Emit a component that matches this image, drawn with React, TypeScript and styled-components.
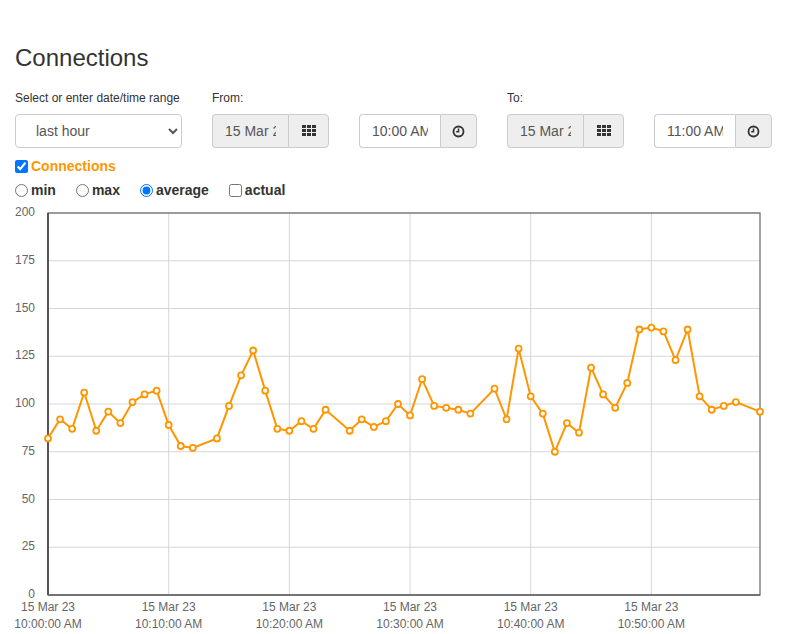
import React from "react";
import styled, { createGlobalStyle } from "styled-components";

const GlobalStyle = createGlobalStyle`
    body {
        margin: 0;
        background: #fff;
        font-family: "Liberation Sans", Arial, sans-serif;
        color: #333;
    }
`;

const DATA: (number | null)[] = [
    82, 92, 87, 106, 86, 96, 90, 101, 105, 107,
    89, 78, 77, null, 82, 99, 115, 128, 107, 87,
    86, 91, 87, 97, null, 86, 92, 88, 91, 100,
    94, 113, 99, 98, 97, 95, null, 108, 92, 129,
    104, 95, 75, 90, 85, 119, 105, 98, 111, 139,
    140, 138, 123, 139, 104, 97, 99, 101, null, 96,
];

const LEFT = 48;
const RIGHT = 760;
const TOP = 8;
const BOTTOM = 390;
const STEP = (RIGHT - LEFT) / 59;

function xOf(i: number) {
    return LEFT + i * STEP;
}

function yOf(v: number) {
    return BOTTOM - (v / 200) * (BOTTOM - TOP);
}

function GridIcon() {
    return (
        <svg width="14" height="12" viewBox="0 0 14 12">
            {[0, 1, 2].map((r) =>
                [0, 1, 2].map((c) => (
                    <rect key={`${r}-${c}`} x={c * 5} y={r * 4} width="4" height="3" fill="#333" />
                ))
            )}
        </svg>
    );
}

function ClockIcon() {
    return (
        <svg width="13" height="13" viewBox="0 0 13 13">
            <circle cx="6.5" cy="6.5" r="5" fill="none" stroke="#333" strokeWidth="1.8" />
            <path d="M6.5 3.5 V6.8 H4.2" fill="none" stroke="#333" strokeWidth="1.5" />
        </svg>
    );
}

function Chart() {
    const points = DATA.map((v, i) => (v === null ? null : { x: xOf(i), y: yOf(v) })).filter(
        (p): p is { x: number; y: number } => p !== null
    );
    const path = points.map((p, i) => `${i === 0 ? "M" : "L"}${p.x.toFixed(1)} ${p.y.toFixed(1)}`).join(" ");
    const yTicks = [0, 25, 50, 75, 100, 125, 150, 175, 200];
    const xTicks = ["10:00:00 AM", "10:10:00 AM", "10:20:00 AM", "10:30:00 AM", "10:40:00 AM", "10:50:00 AM"];

    return (
        <ChartSvg width="787" height="429" viewBox="0 0 787 429">
            {yTicks.map((t) => (
                <g key={t}>
                    <line x1={LEFT} x2={RIGHT} y1={yOf(t)} y2={yOf(t)} stroke="#d6d6d6" strokeWidth="1" />
                    <AxisText x={35} y={yOf(t) + 3} textAnchor="end">
                        {t}
                    </AxisText>
                </g>
            ))}
            {xTicks.map((t, i) => {
                const x = LEFT + i * STEP * 10;
                return (
                    <g key={t}>
                        <line x1={x} x2={x} y1={TOP} y2={BOTTOM} stroke="#d6d6d6" strokeWidth="1" />
                        <AxisText x={x} y={BOTTOM + 16} textAnchor="middle">
                            15 Mar 23
                        </AxisText>
                        <AxisText x={x} y={BOTTOM + 33} textAnchor="middle">
                            {t}
                        </AxisText>
                    </g>
                );
            })}
            <rect x={LEFT} y={TOP} width={RIGHT - LEFT} height={BOTTOM - TOP} fill="none" stroke="#666" strokeWidth="1.2" />
            <line x1={LEFT} x2={LEFT} y1={TOP} y2={BOTTOM} stroke="#444" strokeWidth="1.6" />
            <line x1={LEFT} x2={RIGHT} y1={BOTTOM} y2={BOTTOM} stroke="#666" strokeWidth="1.6" />
            <path d={path} fill="none" stroke="#ff9600" strokeWidth="2" />
            {points.map((p, i) => (
                <circle key={i} cx={p.x} cy={p.y} r="3" fill="#fff" stroke="#ff9600" strokeWidth="1.8" />
            ))}
        </ChartSvg>
    );
}

function App() {
    return (
        <Page>
            <GlobalStyle />
            <Title>Connections</Title>
            <FormRow>
                <Field>
                    <FieldLabel>Select or enter date/time range</FieldLabel>
                    <Select defaultValue="last hour">
                        <option>last hour</option>
                        <option>last day</option>
                        <option>last week</option>
                    </Select>
                </Field>
                <Field>
                    <FieldLabel>From:</FieldLabel>
                    <InputGroup>
                        <TextInput $width={76} $readonly readOnly value="15 Mar 23" />
                        <Addon $width={41}>
                            <GridIcon />
                        </Addon>
                    </InputGroup>
                </Field>
                <Field>
                    <FieldLabel>&nbsp;</FieldLabel>
                    <InputGroup>
                        <TextInput $width={81} readOnly value="10:00 AM" />
                        <Addon $width={37}>
                            <ClockIcon />
                        </Addon>
                    </InputGroup>
                </Field>
                <Field>
                    <FieldLabel>To:</FieldLabel>
                    <InputGroup>
                        <TextInput $width={76} $readonly readOnly value="15 Mar 23" />
                        <Addon $width={41}>
                            <GridIcon />
                        </Addon>
                    </InputGroup>
                </Field>
                <Field>
                    <FieldLabel>&nbsp;</FieldLabel>
                    <InputGroup>
                        <TextInput $width={81} readOnly value="11:00 AM" />
                        <Addon $width={37}>
                            <ClockIcon />
                        </Addon>
                    </InputGroup>
                </Field>
            </FormRow>
            <SeriesToggle>
                <Check type="checkbox" defaultChecked />
                <SeriesName>Connections</SeriesName>
            </SeriesToggle>
            <ModeRow>
                <Option>
                    <Check type="radio" name="mode" />
                    min
                </Option>
                <Option>
                    <Check type="radio" name="mode" />
                    max
                </Option>
                <Option>
                    <Check type="radio" name="mode" defaultChecked />
                    average
                </Option>
                <Option>
                    <Check type="checkbox" />
                    actual
                </Option>
            </ModeRow>
            <Chart />
        </Page>
    );
}

const Page = styled.div`
    padding: 0 0 0 15px;
    width: 787px;
    box-sizing: border-box;
`;

const Title = styled.h2`
    margin: 0;
    padding-top: 43px;
    font-size: 24px;
    font-weight: 500;
    line-height: 30px;
    color: #333;
`;

const FormRow = styled.div`
    display: flex;
    gap: 30px;
    margin-top: 18px;
`;

const Field = styled.div`
    display: flex;
    flex-direction: column;
`;

const FieldLabel = styled.label`
    font-size: 12px;
    line-height: 14px;
    margin-bottom: 9px;
    color: #333;
`;

const Select = styled.select`
    width: 167px;
    height: 34px;
    padding: 0 12px;
    font-size: 14px;
    font-family: "Liberation Sans", Arial, sans-serif;
    color: #555;
    border: 1px solid #ccc;
    border-radius: 4px;
    background: #fff;
    text-indent: 4px;
`;

const InputGroup = styled.div`
    display: flex;
    height: 34px;
`;

const TextInput = styled.input<{ $width: number; $readonly?: boolean }>`
    width: ${(p) => p.$width}px;
    box-sizing: border-box;
    height: 34px;
    padding: 0 12px;
    font-size: 14px;
    font-family: "Liberation Sans", Arial, sans-serif;
    color: #555;
    background: ${(p) => (p.$readonly ? "#eee" : "#fff")};
    border: 1px solid #ccc;
    border-right: none;
    border-radius: 4px 0 0 4px;
    outline: none;
`;

const Addon = styled.span<{ $width: number }>`
    width: ${(p) => p.$width}px;
    box-sizing: border-box;
    display: flex;
    align-items: center;
    justify-content: center;
    background: #eee;
    border: 1px solid #ccc;
    border-radius: 0 4px 4px 0;
`;

const SeriesToggle = styled.label`
    display: flex;
    align-items: center;
    margin-top: 9px;
    height: 18px;
`;

const Check = styled.input`
    margin: 0 3px 0 0;
    width: 13px;
    height: 13px;
`;

const SeriesName = styled.span`
    font-size: 14px;
    font-weight: 700;
    color: #ff9600;
`;

const ModeRow = styled.div`
    display: flex;
    gap: 20px;
    margin-top: 5px;
    height: 20px;
    align-items: center;
`;

const Option = styled.label`
    display: flex;
    align-items: center;
    font-size: 14px;
    font-weight: 700;
    color: #333;
`;

const ChartSvg = styled.svg`
    display: block;
    margin-left: -15px;
    margin-top: 5px;
`;

const AxisText = styled.text`
    font-family: "Liberation Sans", Arial, sans-serif;
    font-size: 12px;
    fill: #666;
`;

export default App;
